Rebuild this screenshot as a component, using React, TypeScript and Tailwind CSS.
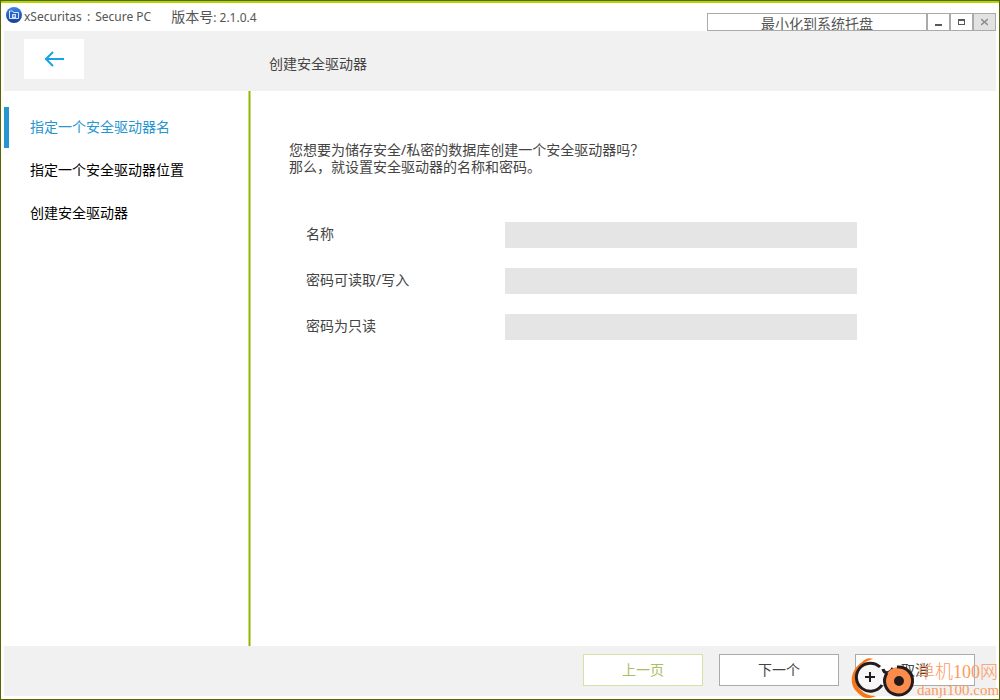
import { useState } from "react";

const steps = ["指定一个安全驱动器名", "指定一个安全驱动器位置", "创建安全驱动器"];

const fields = [
  { id: "name", label: "名称", type: "text" },
  { id: "rw-password", label: "密码可读取/写入", type: "password" },
  { id: "ro-password", label: "密码为只读", type: "password" }
];

function AppIcon() {
  return (
    <svg width="18" height="18" viewBox="0 0 18 18" aria-hidden="true">
      <defs>
        <linearGradient id="orb" x1="0" y1="0" x2="0" y2="1">
          <stop offset="0" stopColor="#3f86ea" />
          <stop offset="0.6" stopColor="#2257bd" />
          <stop offset="1" stopColor="#173f94" />
        </linearGradient>
      </defs>
      <circle cx="9" cy="9" r="8" fill="url(#orb)" />
      <path d="M4.5 12.500V5h3l1 1.500h5v6z" fill="#2d61c0" stroke="#d5e5ff" strokeWidth="1" />
      <rect x="7" y="8" width="4" height="4" fill="#c5dcff" />
      <path d="M9 9v2" stroke="#2257bd" />
    </svg>
  );
}

function TitleBar() {
  return (
    <header className="flex h-7 items-start justify-between">
      <div className="flex h-7 items-center">
        <div className="w-5 pb-1 pl-px">
          <AppIcon />
        </div>
        <h1 className="text-[12px] text-[#555]">
          xSecuritas <span className="px-0.5">:</span> Secure PC
        </h1>
        <span className="ml-5 pb-0.5 text-[12px] text-[#555]">
          <span className="text-[14px]">版本号</span>: 2.1.0.4
        </span>
      </div>
      <div className="mt-[10px] flex h-[18px]">
        <button className="w-[220px] overflow-hidden border border-[#aaa] bg-white text-[14px] leading-5 text-[#555]">
          最小化到系统托盘
        </button>
        <button aria-label="最小化" className="flex w-[23px] items-center justify-center border border-[#aaa] bg-white">
          <svg width="7" height="8" viewBox="0 0 7 8">
            <path d="M0 6h7v2H0z" fill="#5c5a50" />
          </svg>
        </button>
        <button aria-label="最大化" className="flex w-[23px] items-center justify-center border border-[#aaa] bg-white">
          <svg width="7" height="6" viewBox="0 0 7 6">
            <path d="M0 0h7v6H0zM1 2v3h5V2z" fill="#5c5a50" fillRule="evenodd" />
          </svg>
        </button>
        <button aria-label="关闭" className="flex w-[23px] items-center justify-center border border-[#aaa] bg-[#e2e2e2]">
          <svg width="7" height="8" viewBox="0 0 7 8">
            <path d="M0 1l7 6M7 1L0 7" stroke="#8c8c8c" strokeWidth="1.600" />
          </svg>
        </button>
      </div>
    </header>
  );
}

function Watermark() {
  return (
    <div className="pointer-events-none absolute right-0.5 bottom-0 flex items-end text-[#fb9a62]">
      <svg width="66" height="42" viewBox="0 0 66 42" fill="none" aria-hidden="true">
        <path
          d="M22 2C18 0 14 2 11 5C0 12-3 27 6 35C11 41 17 43 25 39C17 39 12 36 8 31C2 23 3 13 11 8C14 5 18 3 22 2Z"
          fill="#f97618"
        />
        <circle cx="19" cy="20" r="14" fill="#f7f7f7" />
        <path d="M29 10A14 14 0 1 0 31 28" stroke="#241c1c" strokeWidth="3" />
        <path d="M14 20h10M19 15v10" stroke="#241c1c" strokeWidth="2" />
        <path d="M32 12C33 17 39 17 42 11" stroke="#241c1c" strokeWidth="3" />
        <circle cx="48" cy="24" r="14" fill="#fc8c4c" />
        <path d="M46 10A14 14 0 1 1 36 16" stroke="#241c1c" strokeWidth="3" />
        <circle cx="48" cy="24" r="4" fill="#241c1c" stroke="#241c1c" strokeWidth="2" />
      </svg>
      <div className="w-20 pb-px font-['Liberation_Serif','Noto_Sans_CJK_SC',serif] font-light whitespace-nowrap">
        <p className="text-[18px] leading-5">单机100网</p>
        <p className="text-[15px] leading-4">danji100.com</p>
      </div>
    </div>
  );
}

export default function App() {
  const [step, setStep] = useState(0);

  return (
    <div className="relative flex min-h-screen flex-col border border-[#566600] bg-white font-['Noto_Sans','Noto_Sans_CJK_SC',sans-serif] text-[14px] text-[#444]">
      <div className="h-0.5 bg-[#b0d800]" />
      <div className="flex flex-1 flex-col px-[3px] pb-[3px]">
        <TitleBar />

        <div className="flex h-[60px] bg-[#f1f1f1]">
          <div className="w-[265px] shrink-0 pt-2 pl-5">
            <button aria-label="返回" className="flex h-10 w-[60px] items-center justify-center bg-white">
              <svg width="20" height="16" viewBox="0 0 20 16" fill="none" stroke="#1ba1e2" strokeWidth="2">
                <path d="M20 8H1M9 1L2 8l7 7" />
              </svg>
            </button>
          </div>
          <h2 className="pt-[23px] leading-5">创建安全驱动器</h2>
        </div>

        <div className="flex flex-1">
          <nav className="w-[244px] shrink-0 pt-4">
            <ul className="flex flex-col gap-0.5">
              {steps.map((label, i) => (
                <li key={label}>
                  <button
                    onClick={() => setStep(i)}
                    className={
                      i === step
                        ? "h-[41px] w-full border-l-[5px] border-[#2796d0] pb-0.5 pl-[21px] text-left text-[#2796d0]"
                        : "h-[41px] w-full border-l-[5px] border-transparent pb-0.5 pl-[21px] text-left text-black"
                    }
                  >
                    {label}
                  </button>
                </li>
              ))}
            </ul>
          </nav>
          <div className="w-[3px] shrink-0 border-x border-[#c5db7c] bg-[#8db600]" />

          <main className="min-w-0 flex-1 pt-[50px] pr-8 pl-[38px]">
            <p className="leading-[17px]">
              您想要为储存安全/私密的数据库创建一个安全驱动器吗？
              <br />
              那么，就设置安全驱动器的名称和密码。
            </p>
            <form className="mt-[47px] flex flex-col gap-5 pl-[17px]">
              {fields.map((field) => (
                <div key={field.id} className="flex">
                  <label htmlFor={field.id} className="w-[199px] shrink-0 leading-6">
                    {field.label}
                  </label>
                  <input
                    id={field.id}
                    type={field.type}
                    className="h-[26px] w-full max-w-[352px] min-w-0 bg-[#e5e5e5] px-2 outline-none"
                  />
                </div>
              ))}
            </form>
          </main>
        </div>

        <footer className="flex h-[50px] justify-end gap-4 bg-[#f1f1f1] pt-2 pr-[21px]">
          <button
            disabled={step === 0}
            onClick={() => setStep(step - 1)}
            className="h-8 w-[120px] border border-[#aaa] bg-white pb-0.5 disabled:border-[#d4e2a4] disabled:text-[#a9bd66]"
          >
            上一页
          </button>
          <button
            onClick={() => setStep(Math.min(step + 1, steps.length - 1))}
            className="h-8 w-[120px] border border-[#aaa] bg-white pb-0.5"
          >
            下一个
          </button>
          <button className="h-8 w-[120px] border border-[#aaa] bg-white pb-0.5">取消</button>
        </footer>
      </div>
      <Watermark />
    </div>
  );
}
